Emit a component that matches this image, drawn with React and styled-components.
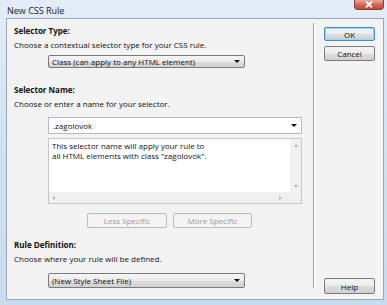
import styled, { createGlobalStyle } from "styled-components";

const GlobalStyle = createGlobalStyle`
  html, body {
    margin: 0;
    padding: 0;
    background: #dce8f4;
  }
  body {
    font-family: "Open Sans", "Noto Sans", sans-serif;
    font-size: 8px;
    color: #111;
  }
`;

const Window = styled.div`
  width: 387px;
  height: 305px;
  box-sizing: border-box;
  display: flex;
  flex-direction: column;
  background: linear-gradient(180deg, #e3edf8 0%, #d3e2f2 40%, #c9dbee 100%);
  padding: 0 3px 5px 6px;
`;

const TitleBar = styled.div`
  height: 18px;
  display: flex;
  align-items: center;
  justify-content: space-between;
  margin-left: -6px;
  margin-right: -3px;
`;

const Title = styled.span`
  font-size: 9px;
  padding-left: 7px;
  padding-top: 2px;
  color: #1a1a1a;
`;

const CloseButton = styled.div`
  align-self: flex-start;
  width: 28px;
  height: 9px;
  margin-right: 3px;
  border: 1px solid #8a3b33;
  border-top: none;
  border-radius: 0 0 4px 4px;
  background: linear-gradient(180deg, #e7a99f 0%, #d46a5a 50%, #c54430 100%);
  display: flex;
  align-items: center;
  justify-content: center;
`;

const Body = styled.div`
  flex: 1;
  display: flex;
  background: #f3f3f3;
  border: 1px solid #99a8b9;
`;

const LeftPanel = styled.div`
  width: 299px;
  padding: 5px 0 0 7px;
  display: flex;
  flex-direction: column;
`;

const Separator = styled.div`
  width: 1px;
  background: #a0a0a0;
  border-right: 1px solid #fff;
  margin: 4px 0 11px;
`;

const RightPanel = styled.div`
  flex: 1;
  display: flex;
  flex-direction: column;
  align-items: flex-start;
  padding: 8px 0 5px 9px;
  gap: 5px;
`;

const Heading = styled.div`
  font-weight: 700;
  line-height: 14px;
  margin-top: ${(p) => p.$top || 0}px;
`;

const Desc = styled.div`
  line-height: 14px;
`;

const Indent = styled.div`
  margin-left: 34px;
  margin-top: ${(p) => p.$top || 0}px;
`;

const Dropdown = styled.div`
  width: 197px;
  height: ${(p) => p.$h}px;
  box-sizing: border-box;
  border: 1px solid #7a7a7a;
  border-radius: 2px;
  background: linear-gradient(180deg, #f6f6f6 0%, #ebebeb 50%, #dcdcdc 51%, #d2d2d2 100%);
  display: flex;
  align-items: center;
  justify-content: space-between;
  padding: 0 4px 0 3px;
`;

const Arrow = styled.span`
  width: 0;
  height: 0;
  border-left: 3px solid transparent;
  border-right: 3px solid transparent;
  border-top: 3px solid #111;
`;

const Combo = styled.div`
  width: 254px;
  height: 17px;
  box-sizing: border-box;
  border: 1px solid #b5b9c0;
  background: #fff;
  display: flex;
  align-items: center;
  justify-content: space-between;
  padding: 0 4px 0 4px;
`;

const TextArea = styled.div`
  margin-top: 4px;
  width: 254px;
  height: 66px;
  box-sizing: border-box;
  border: 1px solid #c8c8c8;
  background: #fff;
  display: grid;
  grid-template-columns: 1fr 11px;
  grid-template-rows: 1fr 11px;
`;

const AreaText = styled.div`
  padding: 2px 3px;
  line-height: 10px;
`;

const VScroll = styled.div`
  background: #f0f0f0;
  display: flex;
  flex-direction: column;
  justify-content: space-between;
  align-items: center;
  padding: 5px 0 4px;
`;

const HScroll = styled.div`
  grid-column: 1 / 3;
  background: #f0f0f0;
  display: flex;
  align-items: center;
  justify-content: space-between;
  padding: 0 19px 0 3px;
`;

const ScrollArrow = styled.span`
  width: 0;
  height: 0;
  border: 2px solid transparent;
  ${(p) => p.$dir === "up" && "border-bottom: 3px solid #b8b8b8; border-top: none;"}
  ${(p) => p.$dir === "down" && "border-top: 3px solid #b8b8b8; border-bottom: none;"}
  ${(p) => p.$dir === "left" && "border-right: 3px solid #b8b8b8; border-left: none;"}
  ${(p) => p.$dir === "right" && "border-left: 3px solid #b8b8b8; border-right: none;"}
`;

const ButtonRow = styled.div`
  display: flex;
  gap: 6px;
  margin: 9px 0 0 73px;
`;

const Button = styled.div`
  width: ${(p) => p.$w || 51}px;
  height: ${(p) => p.$h || 15}px;
  box-sizing: border-box;
  border: 1px solid ${(p) => (p.$disabled ? "#b9bdc1" : p.$focus ? "#3c8fc8" : "#7b7b7b")};
  box-shadow: ${(p) => (p.$focus ? "0 0 0 1px #9fd3f2 inset" : "none")};
  border-radius: 2px;
  background: ${(p) =>
    p.$disabled
      ? "#f4f4f4"
      : "linear-gradient(180deg, #f4f4f4 0%, #ececec 50%, #dddddd 51%, #d1d1d1 100%)"};
  color: ${(p) => (p.$disabled ? "#9a9a9a" : "#111")};
  display: flex;
  align-items: center;
  justify-content: center;
`;

const HelpButton = styled(Button)`
  margin-top: auto;
`;

export default function App() {
  return (
    <>
      <GlobalStyle />
      <Window>
        <TitleBar>
          <Title>New CSS Rule</Title>
          <CloseButton>
            <svg width="8" height="7" viewBox="0 0 8 7">
              <path d="M1 0.5 L7 6.5 M7 0.5 L1 6.5" stroke="#fff" strokeWidth="1.8" />
            </svg>
          </CloseButton>
        </TitleBar>
        <Body>
          <LeftPanel>
            <Heading>Selector Type:</Heading>
            <Desc>Choose a contextual selector type for your CSS rule.</Desc>
            <Indent $top={3}>
              <Dropdown $h={13}>
                <span>Class (can apply to any HTML element)</span>
                <Arrow />
              </Dropdown>
            </Indent>
            <Heading $top={15}>Selector Name:</Heading>
            <Desc>Choose or enter a name for your selector.</Desc>
            <Indent $top={6}>
              <Combo>
                <span>.zagolovok</span>
                <Arrow />
              </Combo>
              <TextArea>
                <AreaText>
                  This selector name will apply your rule to
                  <br />
                  all HTML elements with class "zagolovok".
                </AreaText>
                <VScroll>
                  <ScrollArrow $dir="up" />
                  <ScrollArrow $dir="down" />
                </VScroll>
                <HScroll>
                  <ScrollArrow $dir="left" />
                  <ScrollArrow $dir="right" />
                </HScroll>
              </TextArea>
            </Indent>
            <ButtonRow>
              <Button $disabled $w={80}>Less Specific</Button>
              <Button $disabled $w={79}>More Specific</Button>
            </ButtonRow>
            <Heading $top={10}>Rule Definition:</Heading>
            <Desc>Choose where your rule will be defined.</Desc>
            <Indent $top={7}>
              <Dropdown $h={15}>
                <span>(New Style Sheet File)</span>
                <Arrow />
              </Dropdown>
            </Indent>
          </LeftPanel>
          <Separator />
          <RightPanel>
            <Button $focus $h={14}>OK</Button>
            <Button>Cancel</Button>
            <HelpButton $h={16}>Help</HelpButton>
          </RightPanel>
        </Body>
      </Window>
    </>
  );
}
